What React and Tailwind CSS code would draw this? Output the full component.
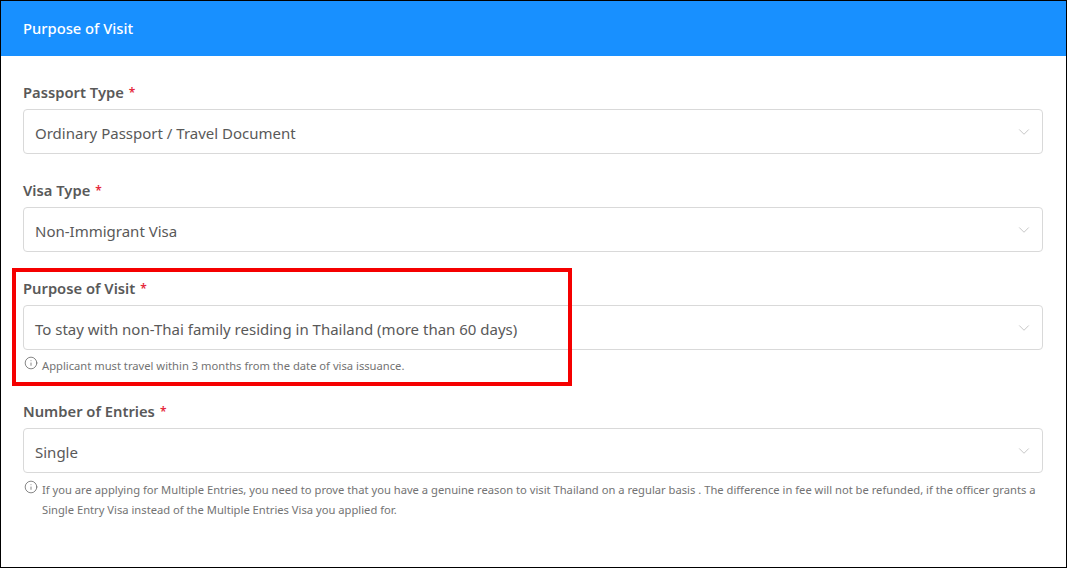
import { ChevronDown, Info } from 'lucide-react';

function Field({ label, value }) {
  return (
    <div>
      <div className="h-6 mb-[5px] flex items-center text-[14.75px] font-semibold text-[#595959]">
        {label}
        <span className="ml-[5px] mt-[2px] text-[#e5283c] text-[12px]">*</span>
      </div>
      <div className="h-[45px] flex items-center justify-between pl-[11px] pr-[9px] border border-[#d9d9d9] rounded-[4px] bg-white text-[15px] text-[#595959]">
        <span className="pt-[3px]">{value}</span>
        <ChevronDown size={18} strokeWidth={1} className="text-[#b4b4b4]" />
      </div>
    </div>
  );
}

function Hint({ children, className }) {
  return (
    <div className={`flex gap-[4px] text-[11.2px] leading-5 text-[#737373] ${className}`}>
      <Info size={14} strokeWidth={1.25} className="mt-[1px] ml-[1px] shrink-0 text-[#595959]" />
      <div className="pt-[1px]">{children}</div>
    </div>
  );
}

export default function App() {
  return (
    <div className="h-[568px] border border-black bg-white font-['Noto_Sans',sans-serif]">
      <div className="h-[55px] bg-[#1890ff] flex items-center px-[22px] text-[14.75px] font-medium text-white">
        Purpose of Visit
      </div>
      <div className="pl-[22px] pr-[23px] pt-6 flex flex-col gap-6">
        <Field label="Passport Type" value="Ordinary Passport / Travel Document" />
        <Field label="Visa Type" value="Non-Immigrant Visa" />
        <div className="relative">
          <Field label="Purpose of Visit" value="To stay with non-Thai family residing in Thailand (more than 60 days)" />
          <Hint className="mt-[5px] h-5">Applicant must travel within 3 months from the date of visa issuance.</Hint>
          <div className="absolute left-[-11px] top-[-8px] w-[560px] h-[118px] border-[4px] border-[#f50000]" />
        </div>
        <div>
          <Field label="Number of Entries" value="Single" />
          <Hint className="mt-[6px]">
            If you are applying for Multiple Entries, you need to prove that you have a genuine reason to visit Thailand on a regular basis . The difference in fee will not be refunded, if the officer grants a Single Entry Visa instead of the Multiple Entries Visa you applied for.
          </Hint>
        </div>
      </div>
    </div>
  );
}
